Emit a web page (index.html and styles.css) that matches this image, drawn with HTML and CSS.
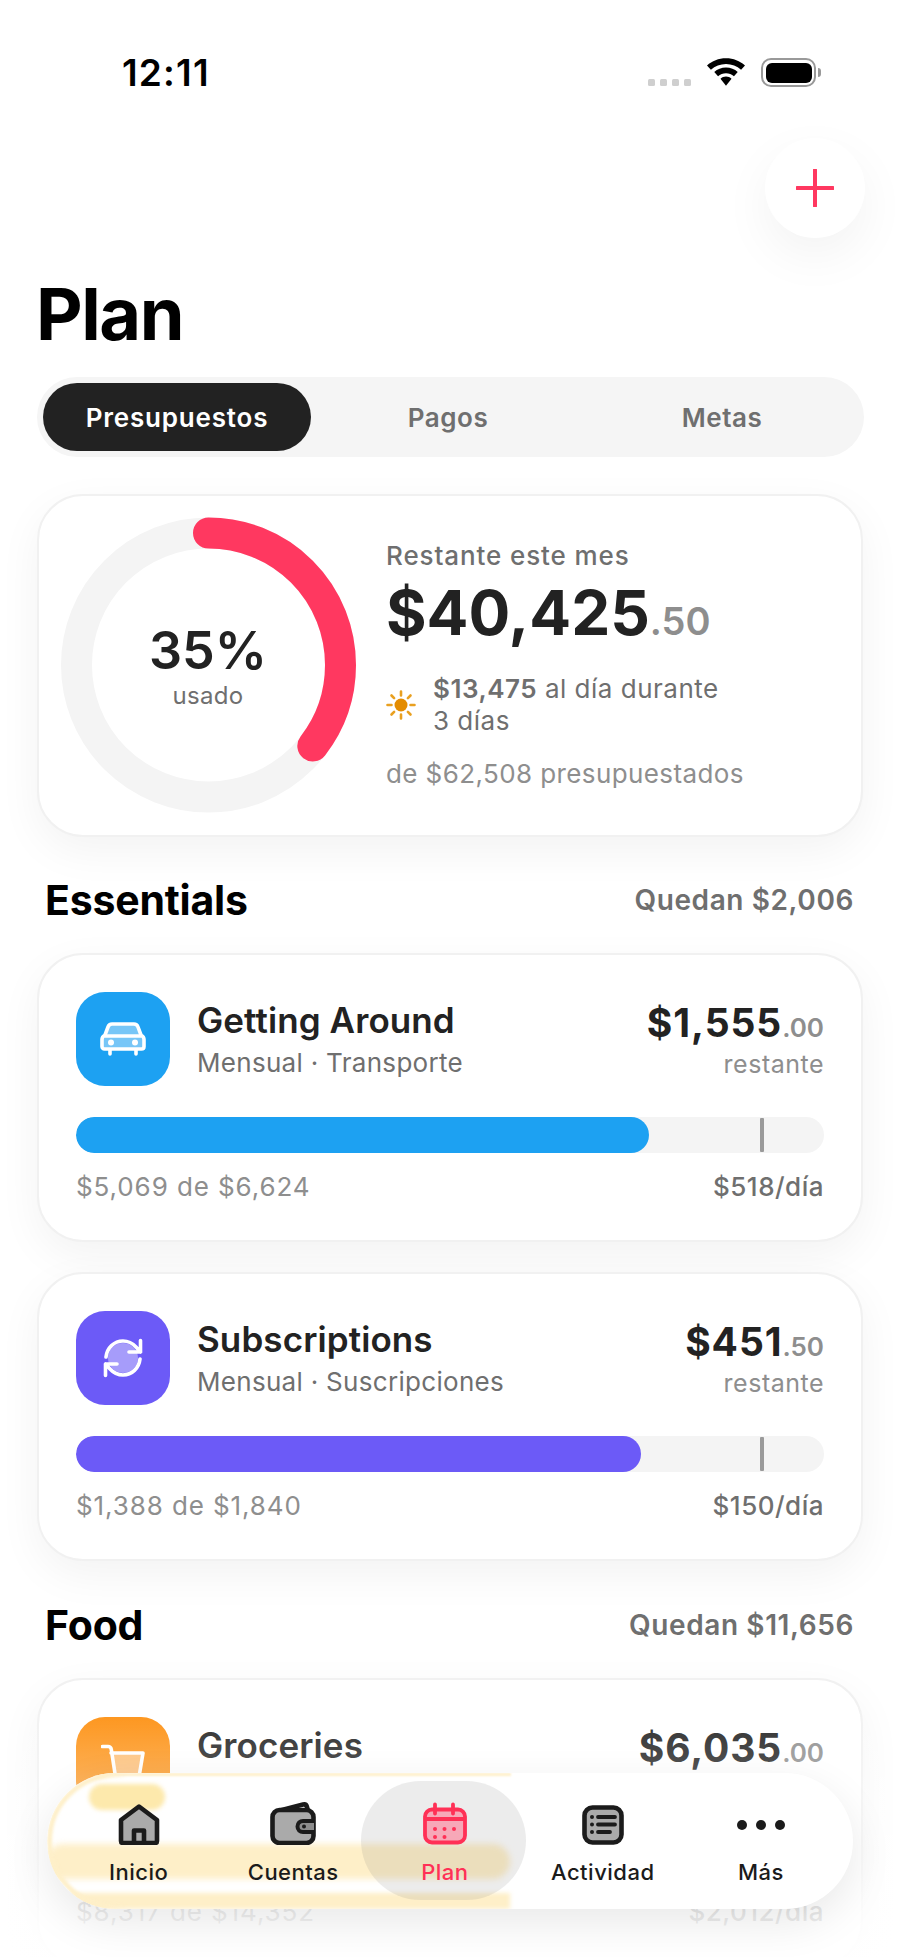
FILE: index.html
```html
<!DOCTYPE html>
<html lang="es">
<head>
<meta charset="utf-8">
<title>Plan</title>
<link rel="stylesheet" href="styles.css">
</head>
<body>
<div class="screen">
  <div class="status">
    <span class="time">12:11</span>
    <div class="status-icons">
      <div class="signal"><i></i><i></i><i></i><i></i></div>
      <svg class="wifi" viewBox="1.500 3 33 24"><path d="M18 3C11.500 3 6 5.300 1.500 9.300L4.900 13C8.500 9.800 13 8 18 8s9.500 1.800 13.100 5l3.400-3.700C30 5.300 24.500 3 18 3z"/><path d="M18 11.200c-3.900 0-7.500 1.400-10.200 3.900l3.300 3.600c1.900-1.600 4.300-2.600 6.900-2.600s5 1 6.900 2.600l3.300-3.600c-2.700-2.500-6.300-3.900-10.200-3.900z"/><path d="M18 19c-1.800 0-3.500.7-4.800 1.800L18 27l4.800-6.200C21.500 19.700 19.800 19 18 19z"/></svg>
      <div class="battery"><div class="battery-level"></div></div>
      <div class="battery-nub"></div>
    </div>
  </div>
  <div class="actions">
    <button class="add" aria-label="Añadir"><svg viewBox="0 0 38 38" width="38" height="38"><path d="M19 1v36M1 19h36"/></svg></button>
  </div>
  <h1 class="title">Plan</h1>
  <div class="tabs">
    <div class="tab tab-on">Presupuestos</div>
    <div class="tab">Pagos</div>
    <div class="tab">Metas</div>
  </div>

  <section class="card hero">
    <div class="ring">
      <svg viewBox="0 0 296 296" width="296" height="296">
        <circle class="ring-bg" cx="148.500" cy="148" r="132"/>
        <circle class="ring-fg" cx="148.500" cy="148" r="132" pathLength="100" stroke-dasharray="35.500 100" transform="rotate(-90 148.500 148)"/>
      </svg>
      <div class="ring-text"><div class="pct">35%</div><div class="used">usado</div></div>
    </div>
    <div class="hero-info">
      <div class="hero-label">Restante este mes</div>
      <div class="hero-amount">$40,425<span class="cents">.50</span></div>
      <div class="hero-rate">
        <svg class="sun" viewBox="0 0 30 30" width="30" height="30"><circle cx="15" cy="15" r="6.500"/><path d="M15 1.500v4M15 24.500v4M1.500 15h4M24.500 15h4M5.500 5.500l2.600 2.600M21.900 21.900l2.600 2.600M5.500 24.500l2.600-2.600M21.900 8.100l2.600-2.600"/></svg>
        <div><b>$13,475</b> al día durante<br>3 días</div>
      </div>
      <div class="hero-total">de $62,508 presupuestados</div>
    </div>
  </section>

  <div class="section-head"><h2>Essentials</h2><span>Quedan $2,006</span></div>
  <section class="card budget">
    <div class="budget-top">
      <div class="cat cat-blue">
        <svg viewBox="0 0 46 36" width="46" height="36"><path class="glass" d="M12 3h22c2 0 3.300 1 4 3l3 8c2 1 3 2.500 3 4.500v7c0 1.500-1 2.500-2.500 2.500h-37C3 28 2 27 2 25.500v-7c0-2 1-3.500 3-4.500l3-8c.7-2 2-3 4-3z"/><path class="line" d="M12 3h22c2 0 3.300 1 4 3l3 8c2 1 3 2.500 3 4.500v7c0 1.500-1 2.500-2.500 2.500h-37C3 28 2 27 2 25.500v-7c0-2 1-3.500 3-4.500l3-8c.7-2 2-3 4-3z"/><path class="line" d="M5 15h36"/><circle class="lamp" cx="11" cy="21.500" r="3"/><circle class="lamp" cx="35" cy="21.500" r="3"/><path class="line" d="M10 29v4M36 29v4"/></svg>
      </div>
      <div class="budget-name"><h3>Getting Around</h3><p>Mensual · Transporte</p></div>
      <div class="budget-left"><div class="amount">$1,555<span class="cents">.00</span></div><p>restante</p></div>
    </div>
    <div class="track"><div class="fill fill-blue" style="width:76.600%"></div><i class="tick"></i></div>
    <div class="budget-foot"><span>$5,069 de $6,624</span><b>$518/día</b></div>
  </section>
  <section class="card budget">
    <div class="budget-top">
      <div class="cat cat-violet">
        <svg viewBox="0 0 40 40" width="40" height="40"><circle class="glass" cx="20" cy="20" r="15"/><path class="line" d="M3 19C4 10 11 3 20 3c5 0 9.500 2.200 13 6l4.500 5M37.500 2.500V14H26"/><path class="line" d="M37 21c-1 9-8 16-17 16-5 0-9.500-2.200-13-6l-4.500-5M2.500 37.500V26H14"/></svg>
      </div>
      <div class="budget-name"><h3>Subscriptions</h3><p>Mensual · Suscripciones</p></div>
      <div class="budget-left"><div class="amount">$451<span class="cents">.50</span></div><p>restante</p></div>
    </div>
    <div class="track"><div class="fill fill-violet" style="width:75.500%"></div><i class="tick"></i></div>
    <div class="budget-foot"><span>$1,388 de $1,840</span><b>$150/día</b></div>
  </section>

  <div class="section-head section-next"><h2>Food</h2><span>Quedan $11,656</span></div>
  <section class="card budget">
    <div class="budget-top">
      <div class="cat cat-orange">
        <svg viewBox="0 0 44 40" width="44" height="40"><path class="glass" d="M10 10h32l-4 22H14z"/><path class="line" d="M1.500 2.500H7c2 0 3 1 3.300 3L15 36M10 9h32l-4 24"/></svg>
      </div>
      <div class="budget-name"><h3>Groceries</h3><p>Mensual · Comida</p></div>
      <div class="budget-left"><div class="amount">$6,035<span class="cents">.00</span></div><p>restante</p></div>
    </div>
    <div class="track"><div class="fill fill-orange" style="width:58%"></div><i class="tick"></i></div>
    <div class="budget-foot"><span>$8,317 de $14,352</span><b>$2,012/día</b></div>
  </section>

  <div class="fade"></div>

  <nav class="nav">
    <div class="stains">
      <div class="stain stain-a"></div>
      <div class="stain stain-b"></div>
      <div class="stain stain-c"></div>
      <div class="stain stain-d"></div>
      <div class="stain stain-rim"></div>
    </div>
    <a class="nav-item">
      <svg viewBox="0 -2 42 42" width="42" height="42"><path class="ico" d="M21 2.500 39 16v21c0 1.200-.8 2-2 2H5c-1.200 0-2-.8-2-2V16z"/><path class="ico-line" d="M16 38V26.500h10V38"/></svg>
      <span>Inicio</span>
    </a>
    <a class="nav-item">
      <svg viewBox="0 0 46 42" width="46" height="42"><path class="ico-line" d="M10 8.500 33 2.500c2-.5 3.500.5 4 2.500l1 4"/><rect class="ico" x="2.500" y="8" width="41" height="33" rx="7"/><path class="ico-pocket" d="M44 19H33c-3 0-5.500 2.300-5.500 5.500S30 30 33 30h11"/><circle cx="34" cy="24.500" r="2"/></svg>
      <span>Cuentas</span>
    </a>
    <a class="nav-item nav-on">
      <svg viewBox="0 -2 44 44" width="44" height="44"><rect class="ico ico-thin" x="2" y="6.500" width="40" height="33" rx="7"/><path class="ico-line ico-thin" d="M3 16h38M12 1.500v9M30 1.500v9"/><circle cx="12" cy="26" r="2"/><circle cx="21.500" cy="26" r="2"/><circle cx="31" cy="26" r="2"/><circle cx="12" cy="34" r="2"/><circle cx="21.500" cy="34" r="2"/></svg>
      <span>Plan</span>
    </a>
    <a class="nav-item">
      <svg viewBox="0 -3 42 42" width="42" height="42"><rect class="ico" x="2.500" y="2.500" width="37" height="35" rx="8"/><path class="ico-list" d="M16 12h17M16 19.500h17M16 27h12"/><circle cx="10" cy="12" r="2"/><circle cx="10" cy="19.500" r="2"/><circle cx="10" cy="27" r="2"/></svg>
      <span>Actividad</span>
    </a>
    <a class="nav-item">
      <svg viewBox="0 -2 48 42" width="48" height="42"><circle cx="5" cy="21" r="5"/><circle cx="24" cy="21" r="5"/><circle cx="43" cy="21" r="5"/></svg>
      <span>Más</span>
    </a>
  </nav>
</div>
</body>
</html>
```

FILE: styles.css
```css
* { box-sizing: border-box; }
html, body { margin: 0; padding: 0; background: #fff; }
body { font-family: Inter, "Noto Sans", "Liberation Sans", sans-serif; color: #222; }
h1, h2, h3, p { margin: 0; }

.screen { position: relative; width: 900px; height: 1957px; overflow: hidden; background: #fff; }

/* status bar */
.status { height: 138px; padding: 53px 79px 0 122px; display: flex; justify-content: space-between; align-items: flex-start; }
.time { font-size: 37px; line-height: 40px; font-weight: 600; color: #000; letter-spacing: 1.200px; }
.status-icons { display: flex; align-items: flex-start; padding-top: 5px; }
.signal { display: flex; gap: 5px; margin-top: 21px; margin-right: 16px; }
.signal i { width: 7px; height: 7px; border-radius: 1.500px; background: #cfcfcf; }
.wifi { width: 38px; height: 28px; fill: #000; margin-right: 16px; }
.battery { width: 55px; height: 29px; border: 2px solid #999; border-radius: 10px; padding: 2.500px; }
.battery-level { height: 100%; background: #000; border-radius: 6px; }
.battery-nub { width: 3px; height: 9px; margin: 10px 0 0 2px; background: #999; border-radius: 0 3px 3px 0; }

/* header */
.actions { height: 100px; padding-right: 35px; display: flex; justify-content: flex-end; }
.add { width: 100px; height: 100px; padding: 0; border: 0; border-radius: 50%; background: #fff; box-shadow: 0 18px 50px rgba(0,0,0,.05); display: flex; align-items: center; justify-content: center; }
.add path { stroke: #ff3860; stroke-width: 4px; stroke-linecap: round; fill: none; }
.title { margin: 36px 0 0 36px; height: 80px; font-size: 72px; line-height: 80px; font-weight: 700; color: #000; letter-spacing: -1.400px; }

/* segmented */
.tabs { margin: 23px 36px 0 37px; height: 80px; padding: 6px 5px 6px 6px; border-radius: 40px; background: #f5f5f5; display: grid; grid-template-columns: 268px 1fr 1fr; }
.tab { display: flex; align-items: center; justify-content: center; font-size: 26px; font-weight: 600; color: #6f6f6f; border-radius: 34px; letter-spacing: .5px; }
.tab-on { background: #222; color: #fff; letter-spacing: .8px; }

/* cards */
.card { margin: 0 37px; background: #fff; border: 2px solid #f1f1f1; border-radius: 46px; box-shadow: 0 14px 44px rgba(0,0,0,.05); }
.hero { margin-top: 37px; height: 343px; padding: 21px 0 0 21px; display: flex; }
.ring { position: relative; width: 296px; height: 296px; flex: none; }
.ring svg { display: block; }
.ring circle { fill: none; stroke-width: 31px; }
.ring-bg { stroke: #f4f4f4; }
.ring-fg { stroke: #ff3860; stroke-linecap: round; }
.ring-text { position: absolute; inset: 0; display: flex; flex-direction: column; align-items: center; justify-content: center; padding-top: 2px; }
.pct { font-size: 52px; line-height: 60px; font-weight: 600; color: #222; }
.used { font-size: 24px; line-height: 30px; color: #6f6f6f; letter-spacing: .3px; }
.hero-info { margin-left: 30px; padding-top: 23px; }
.hero-label { font-size: 26px; line-height: 32px; font-weight: 500; color: #6f6f6f; letter-spacing: .9px; white-space: nowrap; }
.hero-amount { margin-top: 2px; font-size: 62px; line-height: 78px; font-weight: 700; color: #222; letter-spacing: 0; white-space: nowrap; }
.cents { font-weight: 600; color: #8e8e8e; letter-spacing: 0; }
.hero-amount .cents { font-size: 38px; }
.hero-rate { margin-top: 13px; display: flex; align-items: center; gap: 17px; font-size: 26px; line-height: 32px; color: #6f6f6f; letter-spacing: .5px; white-space: nowrap; }
.hero-rate b { font-weight: 600; }
.sun { flex: none; }
.sun circle { fill: #e48c00; }
.sun path { stroke: #e9a020; stroke-width: 2.600px; stroke-linecap: round; fill: none; }
.hero-total { margin-top: 21px; font-size: 26px; line-height: 32px; color: #8e8e8e; white-space: nowrap; letter-spacing: .4px; }

.section-head { margin: 40px 46px 30px 45px; height: 46px; display: flex; justify-content: space-between; align-items: center; }
.section-next { margin-top: 41px; }
.section-head h2 { font-size: 41px; line-height: 46px; font-weight: 700; color: #000; letter-spacing: -.2px; }
.section-head span { font-size: 28px; font-weight: 600; color: #6f6f6f; letter-spacing: .6px; }

.budget { padding: 37px 37px 36px 37px; margin-bottom: 30px; }
.budget-top { display: flex; align-items: flex-start; }
.cat { width: 94px; height: 94px; flex: none; border-radius: 29px; display: flex; align-items: center; justify-content: center; }
.cat .line { fill: none; stroke: #fff; stroke-width: 3.600px; stroke-linecap: round; stroke-linejoin: round; }
.cat .glass { fill: rgba(255,255,255,.4); }
.cat .lamp { fill: #fff; }
.cat-blue { background: #1da1f2; }
.cat-violet { background: #6c5af7; }
.cat-orange { background: linear-gradient(#fd8f0f, #fd9a25); }
.budget-name { margin-left: 27px; flex: 1; padding-top: 7px; }
.budget-name h3 { font-size: 35px; line-height: 42px; font-weight: 600; color: #222; letter-spacing: .1px; }
.budget-name p { margin-top: 6px; font-size: 26px; line-height: 32px; color: #6f6f6f; letter-spacing: .3px; }
.budget-left { text-align: right; padding-top: 8px; }
.amount { font-size: 39px; line-height: 46px; font-weight: 700; color: #222; letter-spacing: .9px; }
.amount .cents { font-size: 26px; letter-spacing: 0; }
.budget-left p { margin-top: -2px; font-size: 25px; line-height: 30px; color: #8e8e8e; letter-spacing: .5px; }
.track { position: relative; margin-top: 31px; height: 36px; border-radius: 18px; background: #f4f4f4; overflow: hidden; }
.fill { height: 100%; border-radius: 18px; }
.fill-blue { background: #1da1f2; }
.fill-violet { background: #6c5af7; }
.fill-orange { background: #ff9a1f; }
.tick { position: absolute; left: 684px; top: 1px; bottom: 1px; width: 4px; background: #9a9a9a; border-radius: 1px; }
.budget-foot { margin-top: 17px; display: flex; justify-content: space-between; font-size: 26px; line-height: 34px; color: #8e8e8e; letter-spacing: .9px; }
.budget-foot b { font-weight: 500; color: #6f6f6f; letter-spacing: .5px; }

/* fade + floating nav */
.fade { position: absolute; left: 0; right: 0; top: 1690px; height: 267px; background: linear-gradient(rgba(255,255,255,0), rgba(255,255,255,.22) 30%, rgba(255,255,255,.86) 85%, rgba(255,255,255,.95)); }
.nav { position: absolute; left: 47px; top: 1773px; width: 806px; height: 136px; border-radius: 68px; background: #fff; box-shadow: 0 14px 44px rgba(0,0,0,.09); display: flex; justify-content: space-between; padding: 28px 68px 0 62px; }
.stains { position: absolute; inset: 0; border-radius: 68px; overflow: hidden; }
.stain { position: absolute; }
.stain-a { left: 42px; top: 11px; width: 76px; height: 26px; border-radius: 13px; background: #fde9ac; filter: blur(2px); }
.stain-b { left: 0; top: 71px; width: 463px; height: 35px; border-radius: 16px 18px 18px 0; background: #feefc8; filter: blur(3px); }
.stain-c { left: 0; top: 120px; width: 463px; height: 16px; background: #feefc8; filter: blur(2px); }
.stain-d { left: 44px; top: 0; width: 420px; height: 3px; background: #feefc8; filter: blur(1px); }
.stain-rim { inset: 0; border: 5px solid #feefc8; border-radius: 68px; -webkit-mask-image: linear-gradient(90deg, #000 7%, transparent 10%); mask-image: linear-gradient(90deg, #000 7%, transparent 10%); filter: blur(1.500px); }
.nav-item { position: relative; display: flex; flex-direction: column; align-items: center; font-size: 22px; line-height: 30px; font-weight: 500; color: #1b1b1b; letter-spacing: .5px; }
.nav-item svg { position: relative; display: block; margin-bottom: 12px; fill: #1b1b1b; height: 44px; }
.nav-item span { position: relative; }
.nav-item:nth-of-type(2) { margin-left: -3px; }
.nav-on { color: #ff3056; }
.nav-on::before { content: ""; position: absolute; left: 50%; top: -20px; width: 165px; height: 119px; margin-left: -84px; border-radius: 60px; background: rgba(120,120,120,.14); }
.nav-on svg { fill: #ff3056; }
.ico { fill: #aaa; stroke: #1b1b1b; stroke-width: 4.600px; stroke-linejoin: round; }
.ico-line { fill: none; stroke: #1b1b1b; stroke-width: 4.600px; stroke-linejoin: round; stroke-linecap: round; }
.ico-pocket { fill: #8d8d8d; stroke: #1b1b1b; stroke-width: 4px; }
.ico-list { fill: none; stroke: #1b1b1b; stroke-width: 3.800px; stroke-linecap: round; }
.nav-on .ico { fill: #f7a8b8; stroke: #ff3056; }
.nav-on .ico-line { stroke: #ff3056; }
.nav-on .ico-thin { stroke-width: 3.800px; }
```
